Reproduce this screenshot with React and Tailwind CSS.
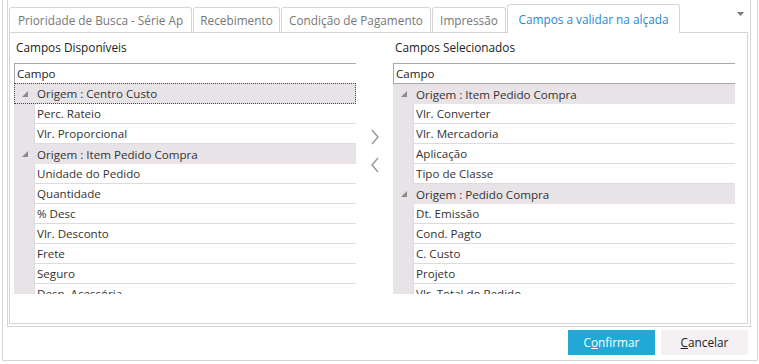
import React from "react";

const leftRows = [
  { g: "Origem : Centro Custo", focus: true },
  "Perc. Rateio",
  "Vlr. Proporcional",
  { g: "Origem : Item Pedido Compra" },
  "Unidade do Pedido",
  "Quantidade",
  "% Desc",
  "Vlr. Desconto",
  "Frete",
  "Seguro",
  "Desp. Acessória",
];

const rightRows = [
  { g: "Origem : Item Pedido Compra" },
  "Vlr. Converter",
  "Vlr. Mercadoria",
  "Aplicação",
  "Tipo de Classe",
  { g: "Origem : Pedido Compra" },
  "Dt. Emissão",
  "Cond. Pagto",
  "C. Custo",
  "Projeto",
  "Vlr. Total do Pedido",
];

function Tri() {
  return (
    <svg width="6" height="6" viewBox="0 0 6 6" className="shrink-0">
      <polygon points="6,0 6,6 0,6" fill="#8a8a8a" />
    </svg>
  );
}

function Grid({ rows, focus }) {
  return (
    <div className="w-[342px] h-[231px] overflow-hidden flex flex-col">
      <div
        className={
          focus
            ? "h-[20px] shrink-0 border-t border-l border-[#a8a8a8] pl-[2px] text-[11.6px] leading-[19px] text-[#222]"
            : "h-[21px] shrink-0 border-t border-l border-b border-[#a8a8a8] pl-[2px] text-[11.6px] leading-[19px] text-[#222]"
        }
      >
        Campo
      </div>
      {rows.map((r, i) =>
        typeof r === "string" ? (
          <div key={i} className="flex h-[20px] shrink-0">
            <div className="w-[20px] shrink-0 bg-[#e7e3e7]" />
            <div className="flex-1 border-l border-b border-[#dcdcdc] pl-[2px] text-[11.6px] leading-[19px] text-[#333] whitespace-nowrap">
              {r}
            </div>
          </div>
        ) : r.focus ? (
          <div
            key={i}
            className="flex items-center h-[21px] shrink-0 bg-[#e7e3e7] border border-dotted border-[#444] pl-[7px] text-[11.6px] text-[#333] whitespace-nowrap"
          >
            <Tri />
            <span className="ml-[9px] leading-[19px]">{r.g}</span>
          </div>
        ) : (
          <div
            key={i}
            className="flex items-center h-[20px] shrink-0 bg-[#e7e3e7] pl-[8px] text-[11.6px] text-[#333] whitespace-nowrap"
          >
            <Tri />
            <span className="ml-[9px] leading-[19px]">{r.g}</span>
          </div>
        )
      )}
    </div>
  );
}

function Tab({ label, w, active }) {
  if (active) {
    return (
      <div
        className={`${w} h-[29px] -mb-px relative z-10 bg-white border-t border-x border-[#d6d6d6] rounded-t-[3px] flex items-center justify-center pt-[1px] text-[11.8px] text-[#1f87d3] whitespace-nowrap`}
      >
        {label}
      </div>
    );
  }
  return (
    <div
      className={`${w} h-[25px] bg-white border-t border-x border-[#d6d6d6] rounded-t-[3px] flex items-center justify-center pt-[1px] text-[11.8px] text-[#777] whitespace-nowrap`}
    >
      {label}
    </div>
  );
}

export default function App() {
  return (
    <div className="w-[759px] h-[364px] bg-white overflow-hidden font-['Open_Sans','Noto_Sans',sans-serif]">
      <div className="ml-[2px] w-[756px] h-[361px] border-x border-b border-[#d4d4d4] flex flex-col">
        <div className="ml-[4px] w-[744px] h-[327px] border-x border-b border-[#d4d4d4] flex flex-col pl-[1px] pr-[2px] pb-[2px]">
          <div className="h-[32px] shrink-0 flex items-end gap-[1px]">
            <Tab label="Prioridade de Busca - Série Ap" w="w-[183px]" />
            <Tab label="Recebimento" w="w-[87px]" />
            <Tab label="Condição de Pagamento" w="w-[150px]" />
            <Tab label="Impressão" w="w-[74px]" />
            <Tab label="Campos a validar na alçada" w="w-[173px]" active />
            <div className="ml-auto mr-[4px] self-start mt-[12px]">
              <svg width="7" height="4" viewBox="0 0 7 4">
                <polygon points="0,0 7,0 3.5,4" fill="#777" />
              </svg>
            </div>
          </div>
          <div className="h-[292px] border border-[#d4d4d4] flex pl-[4px]">
            <div className="flex flex-col w-[342px]">
              <div className="h-[30px] pt-[6px] pl-[2px] text-[11.8px] leading-[16px] text-[#222]">
                Campos Disponíveis
              </div>
              <Grid rows={leftRows} focus />
            </div>
            <div className="w-[37px] flex flex-col items-center pt-[96px] gap-[12px]">
              <svg width="10" height="16" viewBox="0 0 10 16">
                <polyline points="2,1 8,8 2,15" fill="none" stroke="#9a9a9a" strokeWidth="1.5" />
              </svg>
              <svg width="10" height="16" viewBox="0 0 10 16">
                <polyline points="8,1 2,8 8,15" fill="none" stroke="#9a9a9a" strokeWidth="1.5" />
              </svg>
            </div>
            <div className="flex flex-col w-[342px]">
              <div className="h-[30px] pt-[6px] pl-[2px] text-[11.8px] leading-[16px] text-[#222]">
                Campos Selecionados
              </div>
              <Grid rows={rightRows} />
            </div>
          </div>
        </div>
        <div className="flex justify-end gap-[6px] mt-[3px] mr-[9px]">
          <button className="w-[87px] h-[25px] bg-[#22a8d7] text-white text-[11.8px]">
            C<span className="underline">o</span>nfirmar
          </button>
          <button className="w-[87px] h-[25px] bg-[#f4f0f4] text-[#222] text-[11.8px]">
            <span className="underline">C</span>ancelar
          </button>
        </div>
      </div>
    </div>
  );
}
